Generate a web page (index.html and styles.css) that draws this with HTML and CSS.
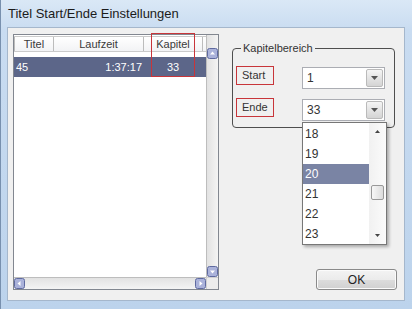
FILE: index.html
```html
<!DOCTYPE html>
<html>

<head>
	<meta charset="utf-8" />
	<title>Titel Start/Ende Einstellungen</title>
	<link rel="stylesheet" href="styles.css">
</head>

<body>
	<div class="window">
		<div class="titlebar">Titel Start/Ende Einstellungen</div>
		<div class="client">
			<div class="list">
				<div class="lv">
					<div class="lv-head">
						<div class="c-titel">Titel</div>
						<div class="c-zeit">Laufzeit</div>
						<div class="c-kap">Kapitel</div>
					</div>
					<div class="lv-row sel">
						<div class="c-titel">45</div>
						<div class="c-zeit">1:37:17</div>
						<div class="c-kap">33</div>
					</div>
					<div class="mark"></div>
				</div>
				<div class="vscroll">
					<svg class="sb" width="11" height="11" viewBox="0 0 11 11"><rect x=".5" y=".5" width="10" height="10" rx="2" fill="#aab2da" stroke="#5f6aa0" /><path d="M3 6.5h5L5.5 3.5z" fill="#fff" /></svg>
					<svg class="sb" width="11" height="11" viewBox="0 0 11 11"><rect x=".5" y=".5" width="10" height="10" rx="2" fill="#aab2da" stroke="#5f6aa0" /><path d="M3 4.5h5L5.5 7.5z" fill="#fff" /></svg>
				</div>
				<div class="hscroll">
					<svg class="sb" width="11" height="11" viewBox="0 0 11 11"><rect x=".5" y=".5" width="10" height="10" rx="2" fill="#aab2da" stroke="#5f6aa0" /><path d="M6.5 3v5L3.5 5.5z" fill="#fff" /></svg>
					<svg class="sb" width="11" height="11" viewBox="0 0 11 11"><rect x=".5" y=".5" width="10" height="10" rx="2" fill="#aab2da" stroke="#5f6aa0" /><path d="M4.5 3v5L7.5 5.5z" fill="#fff" /></svg>
				</div>
				<div class="corner"></div>
			</div>

			<div class="side">
				<fieldset class="group">
					<legend>Kapitelbereich</legend>
					<div class="field">
						<span class="lbl">Start</span>
						<div class="combo">
							<span class="val">1</span>
							<span class="drop-btn"><svg width="7" height="4" viewBox="0 0 7 4"><path d="M0 0h7L3.5 4z" fill="#555" /></svg></span>
						</div>
					</div>
					<div class="field">
						<span class="lbl">Ende</span>
						<div class="combo">
							<span class="val">33</span>
							<span class="drop-btn"><svg width="7" height="4" viewBox="0 0 7 4"><path d="M0 0h7L3.5 4z" fill="#555" /></svg></span>
							<div class="dropdown">
								<ul class="items">
									<li>18</li>
									<li>19</li>
									<li class="hl">20</li>
									<li>21</li>
									<li>22</li>
									<li>23</li>
								</ul>
								<div class="dd-scroll">
									<div class="dd-arrow"><svg width="5" height="3" viewBox="0 0 5 3"><path d="M0 3h5L2.5 0z" fill="#444" /></svg></div>
									<div class="dd-track"><div class="thumb"></div></div>
									<div class="dd-arrow"><svg width="5" height="3" viewBox="0 0 5 3"><path d="M0 0h5L2.5 3z" fill="#444" /></svg></div>
								</div>
							</div>
						</div>
					</div>
				</fieldset>
				<button class="ok" type="button">OK</button>
			</div>
		</div>
	</div>
</body>

</html>
```

FILE: styles.css
```css
* {
	box-sizing:border-box;
}

body {
	margin:0;
	width:412px;
	height:309px;
	overflow:hidden;
	font-family:"Liberation Sans", Arial, sans-serif;
	font-size:11px;
	color:#2a2a2a;
	background:#c3d8ef;
}

.window {
	height:309px;
	display:flex;
	flex-direction:column;
	border-left:1px solid #7890ae;
	background:linear-gradient(180deg, #dae8f6 0, #c9dcf1 30px, #bcd3ec 100%);
}

.titlebar {
	flex:none;
	height:27px;
	line-height:27px;
	padding-left:7px;
	font-size:13px;
	color:#1b1b1b;
}

.client {
	flex:1;
	display:flex;
	margin:0 7px 8px 6px;
	padding:6px 0 0 5px;
	background:#f0f0f0;
	border:1px solid #a5b7cc;
}

/* list view */
.list {
	width:206px;
	height:256px;
	display:grid;
	grid-template-columns:192px 12px;
	grid-template-rows:242px 12px;
	border:1px solid #828790;
	background:#fff;
}

.lv {
	position:relative;
	padding-top:1px;
}

.lv-head,
.lv-row {
	display:grid;
	grid-template-columns:39px 90px 60px;
}

.lv-head {
	height:16px;
	line-height:14px;
	text-align:center;
	color:#3a3a3a;
	background:linear-gradient(#fff, #f2f3f5);
	border-top:1px solid #cbcbcb;
	border-bottom:1px solid #cbcbcb;
}

.lv-head div {
	border-left:1px solid #bcbcbc;
}

.lv-head div:last-child {
	border-right:1px solid #bcbcbc;
}

.lv-row {
	height:20px;
	line-height:20px;
	margin-top:5px;
}

.lv-row.sel {
	background:#5c6689;
	color:#fff;
}

.lv-row .c-titel {
	padding-left:2px;
}

.lv-row .c-zeit {
	text-align:right;
	padding-right:1px;
}

.lv-row .c-kap {
	text-align:center;
}

.mark {
	position:absolute;
	left:137px;
	top:-2px;
	width:44px;
	height:44px;
	border:1px solid #c8353a;
}

.sb {
	display:block;
}

.vscroll {
	display:flex;
	flex-direction:column;
	justify-content:space-between;
	padding-top:13px;
	border-left:1px solid #bdbdbd;
	background:linear-gradient(90deg, #e2e2e2, #f4f4f4);
}

.hscroll {
	display:flex;
	justify-content:space-between;
	border-top:1px solid #bdbdbd;
	background:linear-gradient(#e2e2e2, #f4f4f4);
}

.corner {
	border-top:1px solid #d0d0d0;
	border-left:1px solid #d0d0d0;
	background:#ececec;
}

/* right side */
.side {
	width:165px;
	margin-left:13px;
	display:flex;
	flex-direction:column;
	padding-bottom:10px;
}

.group {
	margin:8px 2px 0 0;
	padding:12px 9px 6px 0;
	min-width:0;
	border:1px solid #4f4f4f;
	border-radius:4px;
}

.group legend {
	margin-left:8px;
	padding:0 2px;
	line-height:12px;
	color:#333;
}

.field {
	display:flex;
	height:23px;
	margin-bottom:9px;
}

.field:last-child {
	margin-bottom:0;
}

.lbl {
	width:38px;
	height:19px;
	margin-left:3px;
	padding-left:5px;
	line-height:17px;
	color:#333;
	border:1px solid #c8353a;
}

.combo {
	position:relative;
	display:flex;
	width:83px;
	height:22px;
	margin:1px 0 0 28px;
	border:1px solid #abadb3;
	background:#fff;
}

.combo .val {
	flex:1;
	padding-left:4px;
	line-height:20px;
	font-size:12px;
	color:#333;
}

.drop-btn {
	width:17px;
	margin:1px;
	display:flex;
	align-items:center;
	justify-content:center;
	border:1px solid #bababa;
	border-radius:2px;
	background:linear-gradient(#f5f5f5, #e4e4e4 50%, #d4d4d4);
}

.dropdown {
	position:absolute;
	top:calc(100% + 2px);
	left:-1px;
	width:85px;
	height:123px;
	display:flex;
	border:1px solid #777;
	background:#fff;
	box-shadow:2px 2px 3px rgba(0, 0, 0, 0.3);
	z-index:2;
}

.items {
	flex:1;
	list-style:none;
	margin:0;
	padding:1px 0 0;
	font-size:12px;
	color:#333;
}

.items li {
	height:20px;
	line-height:20px;
	padding-left:2px;
}

.items li.hl {
	background:#7a84a4;
	color:#fff;
}

.dd-scroll {
	width:17px;
	display:flex;
	flex-direction:column;
	background:linear-gradient(90deg, #f1f1f1, #fbfbfb);
}

.dd-arrow {
	height:17px;
	display:flex;
	align-items:center;
	justify-content:center;
}

.dd-track {
	flex:1;
}

.thumb {
	width:13px;
	height:15px;
	margin:45px auto 0;
	border:1px solid #999;
	border-radius:2px;
	background:linear-gradient(90deg, #f7f7f7, #dcdcdc);
}

.ok {
	align-self:flex-end;
	margin-top:auto;
	width:81px;
	height:21px;
	padding:0;
	border:1px solid #8a8a8a;
	border-radius:3px;
	background:linear-gradient(#f3f3f3, #ebebeb 50%, #dddddd 50%, #d0d0d0);
	box-shadow:inset 0 0 0 1px #fbfbfb;
	font:12px "Liberation Sans", Arial, sans-serif;
	color:#222;
}
```
